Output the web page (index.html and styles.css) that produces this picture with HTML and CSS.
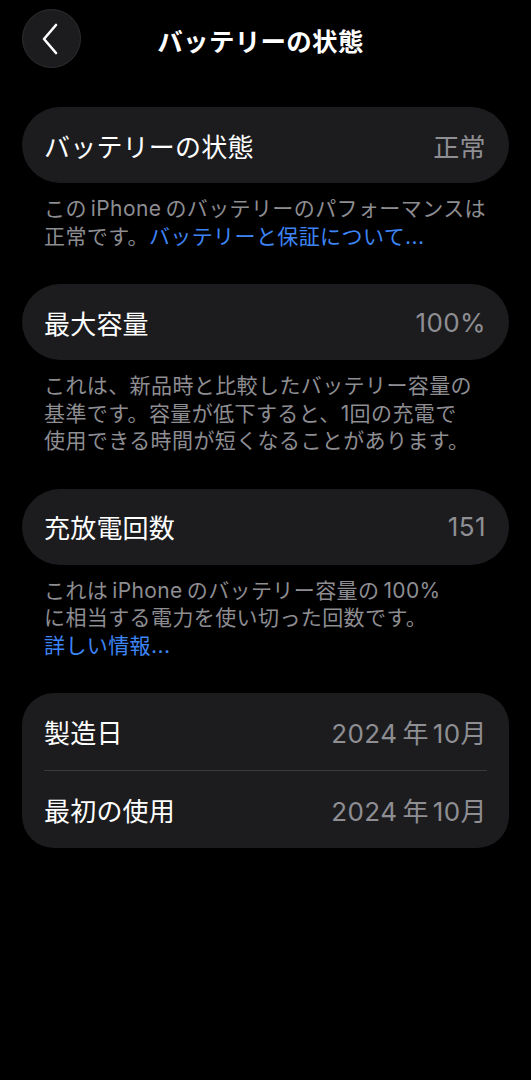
FILE: index.html
```html
<!DOCTYPE html>
<html lang="ja">
<head>
    <meta charset="utf-8">
    <title>バッテリーの状態</title>
    <link rel="stylesheet" href="styles.css">
</head>
<body>
    <div class="header">
        <button class="back-button">
            <svg width="18" height="32" viewBox="0 0 18 32">
                <path d="M15 2 L3 16 L15 30" fill="none" stroke="#fff" stroke-width="2.6" stroke-linecap="round" stroke-linejoin="round"/>
            </svg>
        </button>
        <h1>バッテリーの状態</h1>
    </div>

    <div class="section">
        <div class="card">
            <div class="row">
                <span class="label">バッテリーの状態</span>
                <span class="value">正常</span>
            </div>
        </div>
        <p class="note">この<span class="latin">iPhone</span>のバッテリーのパフォーマンスは<br>正常です。<a class="link">バッテリーと保証について...</a></p>
    </div>

    <div class="section">
        <div class="card">
            <div class="row">
                <span class="label">最大容量</span>
                <span class="value">100%</span>
            </div>
        </div>
        <p class="note">これは、新品時と比較したバッテリー容量の<br>基準です。容量が低下すると、1回の充電で<br>使用できる時間が短くなることがあります。</p>
    </div>

    <div class="section">
        <div class="card">
            <div class="row">
                <span class="label">充放電回数</span>
                <span class="value">151</span>
            </div>
        </div>
        <p class="note">これは<span class="latin">iPhone</span>のバッテリー容量の<span class="latin">100%</span><br>に相当する電力を使い切った回数です。<br><a class="link">詳しい情報...</a></p>
    </div>

    <div class="section">
        <div class="card card-group">
            <div class="row">
                <span class="label">製造日</span>
                <span class="value">2024<span class="unit">年</span>10月</span>
            </div>
            <div class="row">
                <span class="label">最初の使用</span>
                <span class="value">2024<span class="unit">年</span>10月</span>
            </div>
        </div>
    </div>
</body>
</html>
```

FILE: styles.css
```css
body {
    margin: 0;
    padding: 9px 22px 0 22px;
    background-color: #000;
    color: #fff;
    font-family: Inter, "Noto Sans CJK JP", sans-serif;
    height: 1080px;
    box-sizing: border-box;
}
.header {
    position: relative;
    height: 60px;
    display: flex;
    align-items: center;
    justify-content: center;
    margin-bottom: 38px;
}
.back-button {
    position: absolute;
    left: 0;
    top: 0;
    width: 59px;
    height: 59px;
    border-radius: 50%;
    background-color: #1c1c1e;
    border: 1px solid #2e2e30;
    display: flex;
    align-items: center;
    justify-content: center;
    padding: 0 4px 0 0;
}
h1 {
    margin: 0;
    font-size: 25.5px;
    font-weight: 700;
    letter-spacing: 0.3px;
    padding-right: 10px;
}
.section {
    margin-bottom: 34px;
}
.card {
    background-color: #1c1c1e;
    border-radius: 38px;
}
.card-group {
    border-radius: 32px;
}
.row {
    height: 76px;
    display: flex;
    align-items: center;
    justify-content: space-between;
    padding: 0 23px 0 22px;
    font-size: 26px;
}
.card-group .row {
    height: 77px;
    margin: 0 22px;
    padding: 0;
}
.card-group .row + .row {
    border-top: 1px solid #3a3a3c;
}
.label {
    color: #fff;
    letter-spacing: 0.2px;
}
.value {
    color: #8e8e93;
    letter-spacing: 0.4px;
}
.unit {
    margin: 0 4px 0 5px;
}
.latin {
    margin: 0 4px;
}
.note {
    margin: 12px 0 0 0;
    padding: 0 22px;
    font-size: 21px;
    line-height: 27.5px;
    letter-spacing: 0.4px;
    color: #8d8d92;
}
.link {
    color: #3d85f5;
}
```
